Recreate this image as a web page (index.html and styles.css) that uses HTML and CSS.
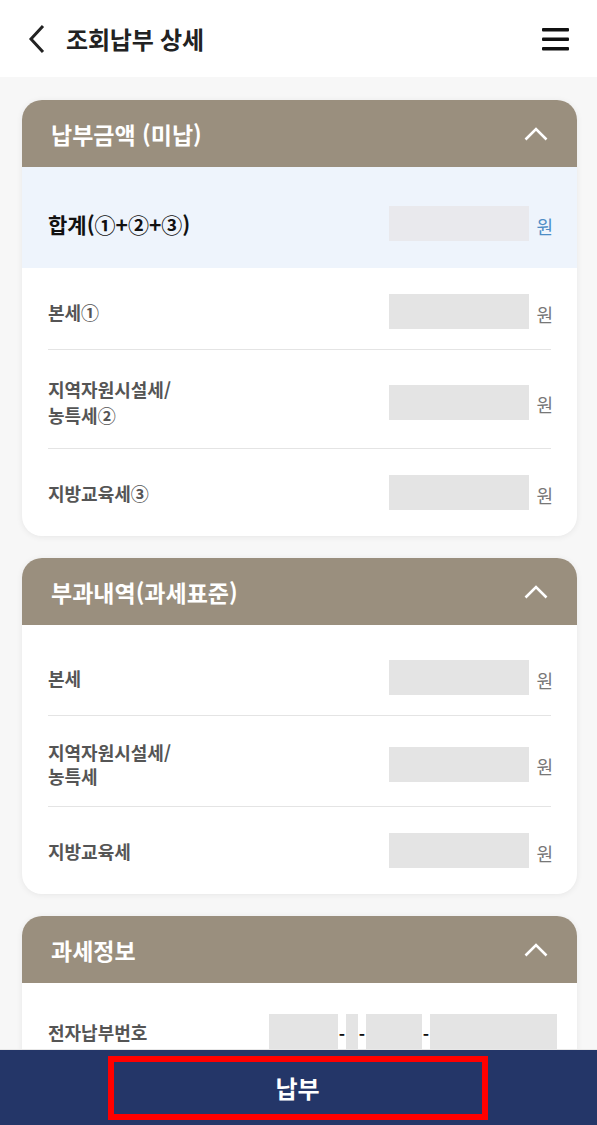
FILE: index.html
```html
<!DOCTYPE html>
<html lang="ko">
<head>
	<meta charset="UTF-8">
	<title>조회납부 상세</title>
	<link rel="stylesheet" href="styles.css">
</head>
<body>
	<div class="top">
		<a href="javascript:;" class="back">
			<svg width="20" height="30" viewBox="0 0 20 30"><polyline points="16,2 4,15 16,28" fill="none" stroke="#222" stroke-width="3"/></svg>
		</a>
		<h1 class="title">조회납부 상세</h1>
		<a href="javascript:;" class="menu">
			<svg width="27" height="24" viewBox="0 0 27 24"><rect x="0" y="1" width="27" height="3.4" rx="1" fill="#111"/><rect x="0" y="10.5" width="27" height="3.4" rx="1" fill="#111"/><rect x="0" y="20" width="27" height="3.4" rx="1" fill="#111"/></svg>
		</a>
	</div>

	<div class="content">
		<!-- 납부금액 -->
		<div class="card">
			<div class="card-head">
				<span>납부금액 (미납)</span>
				<svg class="arrow" width="24" height="14" viewBox="0 0 24 14"><polyline points="1.5,12.5 12,2 22.5,12.5" fill="none" stroke="#fff" stroke-width="2.6"/></svg>
			</div>
			<div class="card-body first">
				<div class="row-total">
					<span class="label">합계(①+②+③)</span>
					<div class="value"><span class="box"></span><span class="won">원</span></div>
				</div>
				<div class="row">
					<span class="label">본세①</span>
					<div class="value"><span class="box"></span><span class="won">원</span></div>
				</div>
				<div class="row">
					<span class="label">지역자원시설세/<br>농특세②</span>
					<div class="value"><span class="box"></span><span class="won">원</span></div>
				</div>
				<div class="row">
					<span class="label">지방교육세③</span>
					<div class="value"><span class="box"></span><span class="won">원</span></div>
				</div>
			</div>
		</div>

		<!-- 부과내역 -->
		<div class="card">
			<div class="card-head">
				<span>부과내역(과세표준)</span>
				<svg class="arrow" width="24" height="14" viewBox="0 0 24 14"><polyline points="1.5,12.5 12,2 22.5,12.5" fill="none" stroke="#fff" stroke-width="2.6"/></svg>
			</div>
			<div class="card-body tight">
				<div class="row">
					<span class="label">본세</span>
					<div class="value"><span class="box"></span><span class="won">원</span></div>
				</div>
				<div class="row two">
					<span class="label">지역자원시설세/<br>농특세</span>
					<div class="value"><span class="box"></span><span class="won">원</span></div>
				</div>
				<div class="row">
					<span class="label">지방교육세</span>
					<div class="value"><span class="box"></span><span class="won">원</span></div>
				</div>
			</div>
		</div>

		<!-- 과세정보 -->
		<div class="card">
			<div class="card-head">
				<span>과세정보</span>
				<svg class="arrow" width="24" height="14" viewBox="0 0 24 14"><polyline points="1.5,12.5 12,2 22.5,12.5" fill="none" stroke="#fff" stroke-width="2.6"/></svg>
			</div>
			<div class="card-body">
				<div class="row row-num">
					<span class="label">전자납부번호</span>
					<div class="num">
						<span class="box b1"></span><span class="dash">-</span>
						<span class="box b2"></span><span class="dash">-</span>
						<span class="box b3"></span><span class="dash">-</span>
						<span class="box b4"></span>
					</div>
				</div>
				<div class="row">
					<span class="label">과세년월</span>
					<div class="value"><span class="box"></span></div>
				</div>
			</div>
		</div>
	</div>

	<div class="bottom">
		<a href="javascript:;" class="pay">납부</a>
	</div>
</body>
</html>
```

FILE: styles.css
```css
html,body{
	margin: 0;padding: 0;
	background: #f7f7f7;
	font-family: "Noto Sans CJK KR", "Noto Sans", sans-serif;
	color: #222;
}
.top{
	height: 77px;
	display: flex;align-items: center;
	padding: 0 28px 0 27px;
	background: #fff;
}
.back{display: block;height: 30px;}
.back svg{display: block;}
.title{
	flex: 1;
	margin: 0 0 0 19px;
	font-size: 24px;font-weight: 700;color: #222;
	letter-spacing: -0.2px;
}
.menu{display: block;height: 24px;}
.menu svg{display: block;}

.content{
	display: flex;flex-direction: column;gap: 22px;
	padding: 23px 20px 120px 22px;
}
.card{
	background: #fff;
	border-radius: 20px;
	overflow: hidden;
	box-shadow: 0 1px 6px rgba(0,0,0,0.07);
}
.card-head{
	height: 67px;
	display: flex;align-items: center;justify-content: space-between;
	padding: 0 29px;
	background: #9a8f7e;
	color: #fff;font-size: 23px;font-weight: 700;
}
.card-head .arrow{display: block;}

.card-body{padding: 9px 0 6px;}
.card-body.first{padding-top: 0;}

.row-total{
	display: flex;align-items: center;justify-content: space-between;
	padding: 39px 26px 27px;
	background: #eef4fc;
}
.row-total .label{font-size: 21px;font-weight: 700;color: #111;line-height: 26px;}
.row-total .box{background: #e9e9ed;}
.row-total .won{color: #4d8dc6;}

.row{
	display: flex;align-items: center;justify-content: space-between;
	margin: 0 26px;
	padding: 26px 0 20px;
	border-bottom: 1px solid #e4e4e4;
}
.row:last-child{border-bottom: none;}
.row.two{padding: 24px 0 18px;}
.label{
	font-size: 18px;font-weight: 700;color: #555;line-height: 26px;
}
.tight .label{line-height: 24px;}
.value{display: flex;align-items: center;margin-right: -2px;}
.box{
	display: block;
	width: 140px;height: 35px;
	background: #e4e4e4;
}
.won{
	margin-left: 7px;
	font-size: 18px;color: #777;
	position: relative;top: 2px;
}

.row-num{padding-top: 22px;}
.num{display: flex;align-items: center;margin-right: -6px;}
.num .dash{width: 8px;text-align: center;font-size: 17px;font-weight: 700;color: #111;position: relative;top: 2px;}
.num .b1{width: 69px;}
.num .b2{width: 12px;}
.num .b3{width: 56px;}
.num .b4{width: 127px;}

.bottom{
	position: fixed;left: 0;right: 0;bottom: 0;
	height: 75px;
	display: flex;align-items: center;justify-content: center;
	background: #243668;
	border-top: 1px solid #e8e8e8;
}
.pay{
	display: block;box-sizing: border-box;
	width: 380px;height: 64px;
	margin-left: -2px;
	border: 6px solid #ff0000;
	text-align: center;line-height: 52px;
	font-size: 24px;font-weight: 700;color: #fff;
	text-decoration: none;
}
```
